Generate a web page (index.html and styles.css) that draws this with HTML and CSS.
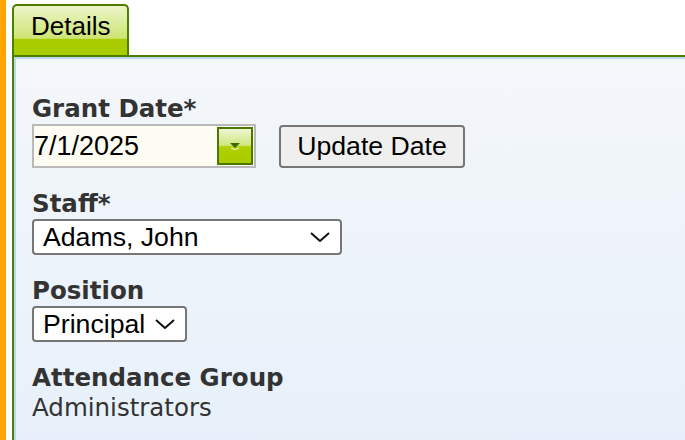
FILE: index.html
```html
<!DOCTYPE HTML>
<html>
<head>
    <meta charset="UTF-8">
    <meta name="viewport" content="width=device-width, initial-scale=1.0">
    <title>Grant Details</title>
    <link rel="stylesheet" href="styles.css">
</head>
<body>
    <div class="rail"></div>

    <div class="page">
        <div class="tabs">
            <div class="tab">Details</div>
        </div>

        <div class="panel">
            <div class="field">
                <label class="label" for="grantDate">Grant Date*</label>
                <div class="date-row">
                    <span class="datepicker">
                        <input type="text" id="grantDate" class="date-input" value="7/1/2025">
                        <span class="date-btn">
                            <svg width="12" height="8" viewBox="0 0 12 8">
                                <polygon points="1,1 11,1 6,6" fill="#3f6a00"/>
                                <polyline points="2,6 6,7.5 10,6" fill="none" stroke="#f4f9e0" stroke-width="1"/>
                            </svg>
                        </span>
                    </span>
                    <button class="btn" type="button">Update Date</button>
                </div>
            </div>

            <div class="field">
                <label class="label" for="staff">Staff*</label>
                <div class="select select-wide">
                    <select id="staff" class="select-input">
                        <option>Adams, John</option>
                    </select>
                    <svg class="chevron" width="20" height="10" viewBox="0 0 20 10">
                        <polyline points="1,1 10,9 19,1" fill="none" stroke="#111" stroke-width="2"/>
                    </svg>
                </div>
            </div>

            <div class="field">
                <label class="label" for="position">Position</label>
                <div class="select">
                    <select id="position" class="select-input">
                        <option>Principal</option>
                    </select>
                    <svg class="chevron" width="20" height="10" viewBox="0 0 20 10">
                        <polyline points="1,1 10,9 19,1" fill="none" stroke="#111" stroke-width="2"/>
                    </svg>
                </div>
            </div>

            <div class="field">
                <div class="label">Attendance Group</div>
                <div class="value">Administrators</div>
            </div>
        </div>
    </div>
</body>
</html>
```

FILE: styles.css
```css
html, body {
    height: 100%;
}

body {
    margin: 0;
    display: flex;
    overflow: hidden;
    background-color: #fff;
    font-family: "DejaVu Sans", Verdana, sans-serif;
}

.rail {
    width: 6px;
    background-color: #ffa400;
}

.page {
    flex: 1;
    margin-left: 6px;
    display: flex;
    flex-direction: column;
}

.tabs {
    display: flex;
    padding-top: 4px;
}

.tab {
    height: 43px;
    padding: 6px 17px 0 17px;
    border: 2px solid #4f7d00;
    border-bottom: none;
    border-radius: 5px 5px 0 0;
    background: linear-gradient(#ecf5ca, #cde572 66%, #a9cc00 68%, #a9cc00);
    font-family: "Liberation Sans", Arial, sans-serif;
    font-size: 26px;
    line-height: 29px;
    color: #000;
}

.panel {
    flex: 1;
    padding: 37px 18px 0 18px;
    border-top: 2px solid #4f7d00;
    border-left: 2px solid #4f7d00;
    box-shadow: inset 2px 2px 0 #bcd8ee;
    background: linear-gradient(#f4f7fa, #e7f0fa);
}

.field {
    margin-bottom: 21px;
}

.label {
    display: block;
    font-size: 24.5px;
    font-weight: bold;
    line-height: 30px;
    color: #333;
}

.value {
    font-size: 24.5px;
    line-height: 30px;
    color: #333;
}

.date-row {
    display: flex;
    align-items: center;
}

.datepicker {
    display: inline-flex;
    width: 220px;
    height: 40px;
    border: 2px solid #b9b9b9;
    background-color: #fcfcf3;
}

.date-input {
    flex: 1;
    min-width: 0;
    padding: 0;
    border: none;
    outline: none;
    background: transparent;
    font-family: "Liberation Sans", Arial, sans-serif;
    font-size: 27px;
    color: #000;
}

.date-btn {
    width: 32px;
    height: 34px;
    margin: 1px;
    border: 2px solid #4a7800;
    display: flex;
    justify-content: center;
    align-items: center;
    background: linear-gradient(#eef6d4, #cfe67e 48%, #b0d000 52%, #a8cb00);
}

.btn {
    width: 186px;
    height: 43px;
    margin-left: 23px;
    padding: 0;
    border: 2px solid #767676;
    border-radius: 4px;
    background-color: #efefef;
    font-family: "Liberation Sans", Arial, sans-serif;
    font-size: 26.67px;
    color: #000;
}

.select {
    display: inline-flex;
    align-items: center;
    box-sizing: border-box;
    height: 36px;
    padding-right: 10px;
    border: 2px solid #767676;
    border-radius: 4px;
    background-color: #fff;
}

.select-wide {
    width: 310px;
}

.select-input {
    flex: 1;
    appearance: none;
    padding: 0 9px 0 9px;
    border: none;
    outline: none;
    background: transparent;
    font-family: "Liberation Sans", Arial, sans-serif;
    font-size: 26.67px;
    color: #000;
}

.chevron {
    flex: none;
}
```
